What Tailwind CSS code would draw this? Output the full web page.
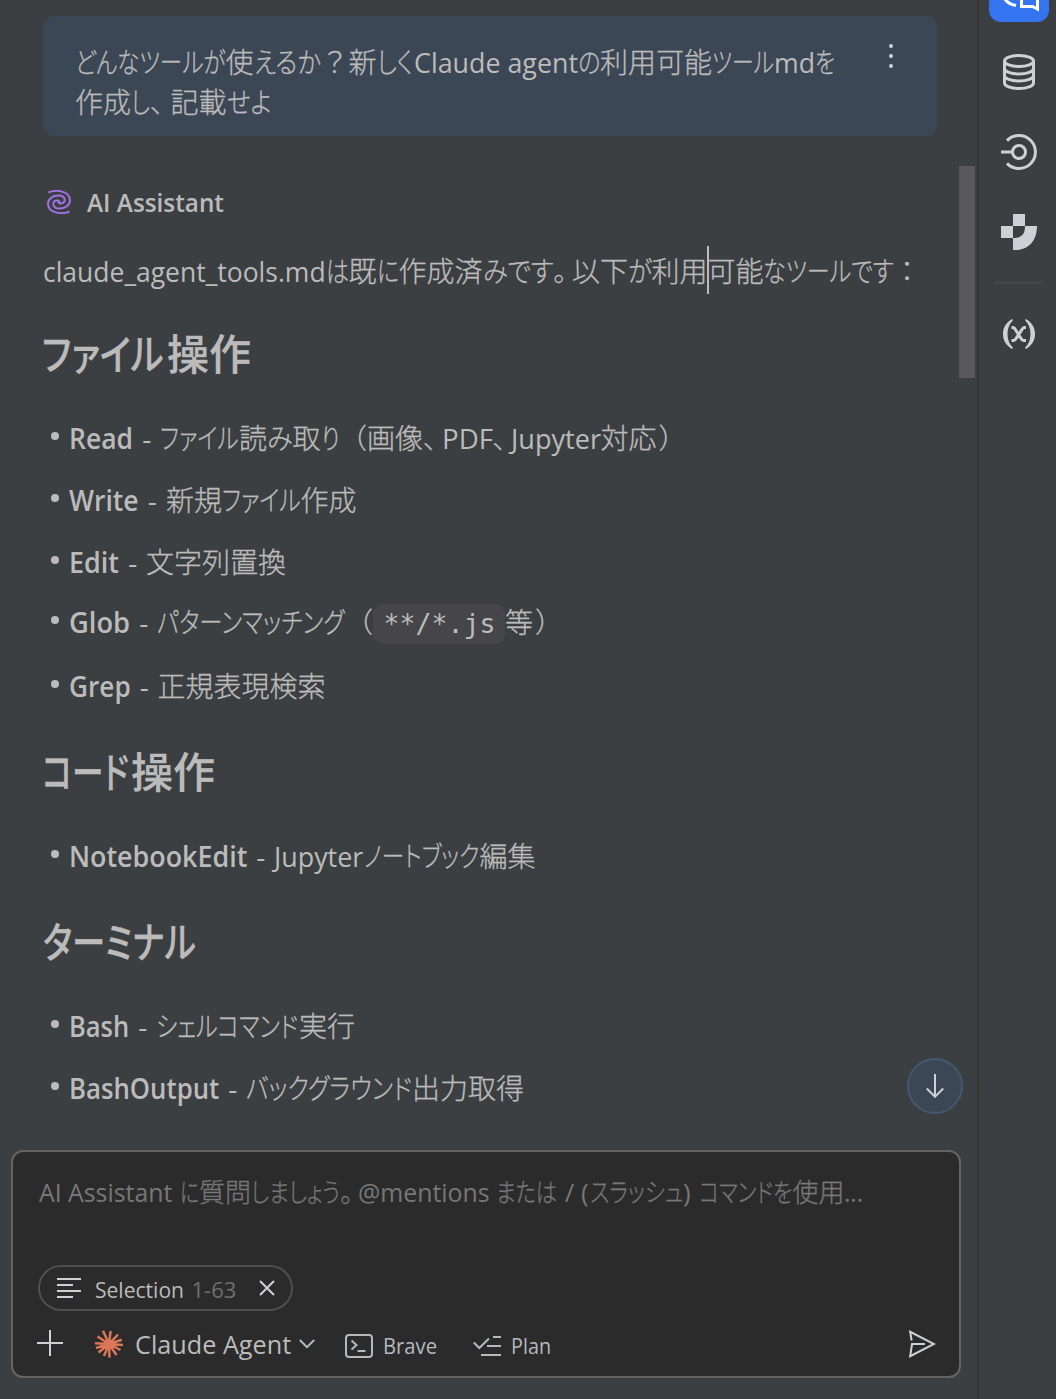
<!DOCTYPE html>
<html lang="ja">
<head>
<meta charset="utf-8">
<title>AI Assistant</title>
<script src="https://cdn.jsdelivr.net/npm/@tailwindcss/browser@4"></script>
</head>
<body class="bg-[#3c3f41]">
<div class="relative flex w-[1056px] h-[1399px] overflow-hidden bg-[#3c3f41] text-[#bbbbbb] text-[28px] leading-[40px] font-light font-['Noto_Sans_CJK_JP',sans-serif] [font-feature-settings:'palt'] [&_span]:whitespace-pre [&_span]:shrink-0 [&_span]:origin-left [&_span]:[-webkit-text-stroke:0.3px] [&_b]:whitespace-pre [&_b]:shrink-0 [&_b]:origin-left [&_b]:font-semibold [&_b]:font-['Open_Sans'] [&_i]:not-italic [&_i]:font-normal [&_i]:font-['Open_Sans'] [&_i]:whitespace-pre [&_i]:shrink-0 [&_i]:origin-left">

<!-- Chat column -->
<main class="w-[977px] h-full shrink-0 flex flex-col">
  <section class="mt-4 ml-[43px] w-[894px] h-[120px] shrink-0 rounded-xl bg-[#3c4755] pl-8 pr-11 pt-6 flex justify-between">
    <div class="pt-px">
      <div class="flex items-baseline h-10">
        <span class="w-[150.5px] scale-x-[.807]">どんなツールが</span><span class="w-[28px]">使</span><span class="w-[67px] scale-x-[.873]">えるか</span><span class="w-[28px] pl-[4px]">？</span><span class="w-[28px]">新</span><span class="w-[37px] scale-x-[.839]">しく</span><i class="w-[164px] scale-x-[.958]">Claude agent</i><span class="w-[22.5px] scale-x-[.833]">の</span><span class="w-[112px]">利用可能</span><span class="w-[62px] scale-x-[.779]">ツール</span><i class="w-[41px] scale-x-[.952]">md</i><span class="w-[20px] scale-x-[.773]">を</span>
      </div>
      <div class="flex items-baseline h-10">
        <span class="w-[56px]">作成</span><span class="w-[19px] scale-x-[.803]">し</span><span class="w-[20.5px]">、</span><span class="w-[56px]">記載</span><span class="w-[44.5px] scale-x-[.865]">せよ</span>
      </div>
    </div>
    <div class="flex flex-col gap-1.5 pt-1 *:size-1 *:rounded-full *:bg-[#ced0d6]"><div></div><div></div><div></div></div>
  </section>

  <div class="mt-[46px] ml-[47px] h-10 shrink-0 flex items-center text-[26px]">
    <svg class="size-6" viewBox="0 0 24 24" fill="none" stroke="#a571e6" stroke-width="1.900" stroke-linecap="round"><path d="M2.200 2.200C9-.4 23 .6 23 10.200c0 5.300-5 8.300-10 8.300-4 0-6.700-1.800-6.700-4.600 0-2.100 1.900-3.400 4.200-3.400 1.200 0 1.900.6 1.900 1.500"/><path d="M21.800 21.800C15 24.400 1 23.400 1 13.800c0-5.300 5-8.300 10-8.300 4 0 6.700 1.800 6.700 4.600 0 2.100-1.900 3.400-4.200 3.400-1.200 0-1.900-.6-1.900-1.500"/></svg>
    <b class="ml-4 w-[137px] scale-x-[.935]">AI Assistant</b>
  </div>

  <div class="relative mt-7 ml-[43px] h-10 shrink-0 flex items-baseline">
    <i class="w-[282.5px] scale-x-[.946]">claude_agent_tools.md</i><span class="w-[23px] scale-x-[.821]">は</span><span class="w-[28px]">既</span><span class="w-[22px] scale-x-[.816]">に</span><span class="w-[84px]">作成済</span><span class="w-[70.5px] scale-x-[.897]">みです</span><span class="w-[19px]">。</span><span class="w-[56px]">以下</span><span class="w-[23.500px] scale-x-[.875]">が</span><span class="w-[111px]">利用可能</span><span class="w-[130.5px] scale-x-[.825]">なツールです</span><span class="w-[28px] pl-[7px]">：</span>
    <div class="absolute left-[664px] top-[-4px] w-0.5 h-12 bg-[#bbbbbb]"></div>
  </div>

  <h2 class="mt-[31px] ml-[42px] h-[60px] pt-px shrink-0 flex items-baseline text-[42px] leading-[60px] font-medium"><span class="w-[125px] scale-x-[.835]">ファイル</span><span class="w-[84px]">操作</span></h2>

  <ul class="mt-[35px] ml-[51px] shrink-0 flex flex-col [&>li]:flex [&>li]:gap-2.5 [&>li]:h-10 [&>li>div]:flex [&>li>div]:items-baseline [&>li>div]:pt-px [&>li]:before:size-2 [&>li]:before:mt-4 [&>li]:before:rounded-full [&>li]:before:bg-[#bbbbbb]">
    <li><div><b class="w-[64px] scale-x-[.945]">Read</b><i class="w-[27px] pl-[2px]"> - </i><span class="w-[79px] scale-x-[.81]">ファイル</span><span class="w-[28px]">読</span><span class="w-[25.5px] scale-x-[.931]">み</span><span class="w-[28px]">取</span><span class="w-[18.500px] scale-x-[.794]">り</span><span class="w-[28px] pl-[13px]">（</span><span class="w-[56px]">画像</span><span class="w-[18.500px]">、</span><i class="w-[51px] scale-x-[.988]">PDF</i><span class="w-[18px]">、</span><i class="w-[90px] scale-x-[.968]">Jupyter</i><span class="w-[56px]">対応</span><span class="pl-[3px]">）</span></div></li>
    <li class="mt-[22px]"><div><b class="w-[69.5px] scale-x-[.945]">Write</b><i class="w-[27.5px] pl-[2px]"> - </i><span class="w-[56px]">新規</span><span class="w-[78.500px] scale-x-[.81]">ファイル</span><span>作成</span></div></li>
    <li class="mt-[22px]"><div><b class="w-[50px] scale-x-[.962]">Edit</b><i class="w-[27px] pl-[2px]"> - </i><span>文字列置換</span></div></li>
    <li class="mt-5"><div><b class="w-[61px] scale-x-[.975]">Glob</b><i class="w-[27px] pl-[2px]"> - </i><span class="w-[188px] scale-x-[.834]">パターンマッチング</span><span class="w-[28px] pl-[13px]">（</span><code class="w-[132px] h-10 -mt-px rounded-[10px] bg-[#45454a] pl-[10.500px] text-[26.6px] font-normal font-['DejaVu_Sans_Mono']">**/*.js</code><span class="w-[28px]">等</span><span class="pl-[3px]">）</span></div></li>
    <li class="mt-6"><div><b class="w-[61.5px] scale-x-[.935]">Grep</b><i class="w-[27px] pl-[2px]"> - </i><span>正規表現検索</span></div></li>
  </ul>

  <h2 class="mt-[35px] ml-[42px] h-[60px] pt-px shrink-0 flex items-baseline text-[42px] leading-[60px] font-medium"><span class="w-[89px] scale-x-[.755]">コード</span><span class="w-[84px]">操作</span></h2>

  <ul class="mt-[35px] ml-[51px] shrink-0 flex flex-col [&>li]:flex [&>li]:gap-2.5 [&>li]:h-10 [&>li>div]:flex [&>li>div]:items-baseline [&>li>div]:pt-px [&>li]:before:size-2 [&>li]:before:mt-4 [&>li]:before:rounded-full [&>li]:before:bg-[#bbbbbb]">
    <li><div><b class="w-[179px] scale-x-[.96]">NotebookEdit</b><i class="w-[26px] pl-px"> - </i><i class="w-[90px] scale-x-[.96]">Jupyter</i><span class="w-[115.5px] scale-x-[.808]">ノートブック</span><span>編集</span></div></li>
  </ul>

  <h2 class="mt-[35px] ml-[43px] h-[60px] pt-px shrink-0 flex items-baseline text-[42px] leading-[60px] font-medium"><span class="w-[155px] scale-x-[.795]">ターミナル</span></h2>

  <ul class="mt-[35px] ml-[51px] shrink-0 flex flex-col [&>li]:flex [&>li]:gap-2.5 [&>li]:h-10 [&>li>div]:flex [&>li>div]:items-baseline [&>li>div]:pt-px [&>li]:before:size-2 [&>li]:before:mt-4 [&>li]:before:rounded-full [&>li]:before:bg-[#bbbbbb]">
    <li><div><b class="w-[60px] scale-x-[.91]">Bash</b><i class="w-[27px] pl-[2px]"> - </i><span class="w-[143px] scale-x-[.82]">シェルコマンド</span><span>実行</span></div></li>
    <li class="mt-[22px]"><div><b class="w-[151px] scale-x-[.92]">BashOutput</b><i class="w-[26px] pl-[1px]"> - </i><span class="w-[166px] scale-x-[.854]">バックグラウンド</span><span>出力取得</span></div></li>
  </ul>

  <!-- Prompt box -->
  <section class="mt-11 ml-[11px] w-[950px] h-[228px] shrink-0 rounded-xl border-2 border-[#646464] bg-[#2b2b2b] pt-[19px] pl-6 pr-[23px]">
    <div class="ml-[2px] h-10 flex items-baseline text-[26px] text-[#777777]">
      <i class="w-[141px] scale-x-[.955]">AI Assistant</i><span class="w-[19px] scale-x-[.759]">に</span><span class="w-[52px]">質問</span><span class="w-[89px] scale-x-[.826]">しましょう</span><span class="w-[18px]">。</span><i class="w-[138px] scale-x-[.955]">@mentions</i><span class="w-[62px] scale-x-[.816]">または</span><i class="w-[32px]"> / (</i><span class="w-[93px] scale-x-[.828]">スラッシュ</span><i class="w-[16px]">) </i><span class="w-[93.5px] scale-x-[.808]">コマンドを</span><span class="w-[51.500px]">使用</span><i class="scale-x-[.927]">...</i>
    </div>
    <div class="mt-[54px] ml-px w-[255px] h-[46px] rounded-full border-2 border-[#4f4f4f] flex items-center text-[22px]">
      <svg class="ml-[17px] -mt-px w-6 h-5 shrink-0" viewBox="0 0 24 20" fill="#ced0d6"><path d="M0 0h24v2H0zM0 6h16v2H0zM0 12h24v2H0zM0 18h16v2H0z"/></svg>
      <i class="ml-3.5 mt-[2px] w-[96.5px] scale-x-[.957]">Selection</i><i class="mt-[2px] w-[45px] text-[#6f6f6f]">1-63</i>
      <svg class="ml-[22px] -mt-px size-4 shrink-0" viewBox="0 0 16 16" fill="none" stroke="#ced0d6" stroke-width="2"><path d="M1 1l14 14M15 1L1 15"/></svg>
    </div>
    <div class="mt-[13px] h-10 flex items-center text-[26px]">
      <svg class="-mt-0.5 size-[26px] shrink-0" viewBox="0 0 26 26" fill="none" stroke="#ced0d6" stroke-width="2"><path d="M13 0v26M0 13h26"/></svg>
      <svg class="ml-8 size-7 shrink-0" viewBox="0 0 28 28" fill="none" stroke="#d97757" stroke-width="2.500"><path d="M14 14L8 .8M14 14L15.600 .8M14 14L23 4.500M14 14L26.800 9.800M14 14L28 15M14 14L25.500 20M14 14L21.500 25M14 14L14.500 27.600M14 14L9 26M14 14L3.500 22.500M14 14L1 18M14 14L0 13.200M14 14L2.500 6.500"/><circle cx="14" cy="14" r="3.500" fill="#d97757"/></svg>
      <i class="ml-3 w-[157px] scale-x-[.97]">Claude Agent</i>
      <svg class="ml-[7px] w-4 h-[10px] shrink-0" viewBox="0 0 16 10" fill="none" stroke="#b4b8bf" stroke-width="2"><path d="M.8 1l7.200 7.200L15.200 1"/></svg>
      <svg class="ml-[30px] mt-1 w-7 h-6 shrink-0" viewBox="0 0 28 24" fill="none" stroke="#b4b8bf" stroke-width="2"><rect x="1" y="1" width="26" height="22" rx="3"/><path d="M6.500 6.500l5 4.500-5 4.500M12.500 17h8"/></svg>
      <i class="ml-2.5 mt-[2px] w-[54px] scale-x-[.919] text-[22px] text-[#b4b8bf]">Brave</i>
      <svg class="ml-9 mt-1 w-7 h-5 shrink-0" viewBox="0 0 28 20" fill="none" stroke="#b4b8bf" stroke-width="2"><path d="M.8 6.500l5.500 5.500L16 2.500M20 1h8M14 10h14M8 19h20"/></svg>
      <i class="ml-2.5 mt-[2px] w-[40px] scale-x-[.899] text-[22px] text-[#b4b8bf]">Plan</i>
      <svg class="ml-auto w-[27px] h-7 shrink-0" viewBox="0 0 27 28" fill="none" stroke="#ced0d6" stroke-width="2"><path d="M2.600 10.500L1.200 1.800 25 14 1.200 26.200 3 14h13"/></svg>
    </div>
  </section>
  <div class="mt-[11px] ml-[418px] h-10 shrink-0 flex text-[22px] text-[#787878]"><span class="scale-x-[.8]">ガバナー は な</span></div>
</main>

<div class="w-0.5 h-full shrink-0 bg-[#3a3332]"></div>

<!-- Tool window bar -->
<aside class="flex-1 h-full flex flex-col items-center pr-[1px]">
  <div class="ml-[4px] w-[60px] h-[22px] shrink-0 rounded-b-xl bg-[#3574f0]">
    <svg class="w-[60px] h-[22px]" viewBox="0 0 60 22" fill="none" stroke="#fff" stroke-width="3"><path d="M15-2c2.500 4 6 6.500 12 7.500M32.500-3v9.500h11L48.500 9V-3"/></svg>
  </div>
  <svg class="ml-[4px] mt-8 w-8 h-9 shrink-0" viewBox="0 0 32 36" fill="none" stroke="#ced0d6" stroke-width="3"><ellipse cx="16" cy="7" rx="14.500" ry="5.500"/><path d="M1.500 7v22c0 3 6.500 5.500 14.500 5.500S30.500 32 30.500 29V7M1.500 14.500C1.500 17.500 8 20 16 20s14.500-2.500 14.500-5.500M1.500 21.500C1.500 24.500 8 27 16 27s14.500-2.500 14.500-5.500"/></svg>
  <svg class="ml-[4px] mt-11 size-9 shrink-0" viewBox="0 0 36 36" fill="none" stroke="#ced0d6" stroke-width="3"><path d="M6 6.600A16.500 16.500 0 1 1 6 29.400M0 18h11.500"/><circle cx="18" cy="18" r="6.500"/></svg>
  <svg class="ml-[4px] mt-11 size-9 shrink-0" viewBox="0 0 36 36" fill="#ced0d6"><path d="M12 0h12v12H12zM0 12h12v12H0zM24 12h12c0 15-9 24-21 24h-3V24c8 0 12-3 12-12z"/></svg>
  <div class="ml-[4px] mt-8 w-12 h-0.5 shrink-0 bg-[#46474a]"></div>
  <svg class="ml-[4px] mt-[35px] w-8 h-[30px] shrink-0" viewBox="0 0 32 30" fill="#ced0d6"><path d="M9 0C2.500 4 0 9 0 15s2.500 11 9 15l1-1.200C6.500 25.500 4.500 21 4.500 15S6.500 4.500 10 1.200zM23 0c6.500 4 9 9 9 15s-2.500 11-9 15l-1-1.200c3.500-3.300 5.500-7.800 5.500-13.800S25.500 4.500 22 1.200z"/><path d="M8.500 8.500h1.300c1.200 0 1.700.5 2.400 1.700l6 9.600c.7 1.200 1.300 1.700 2.400 1.700h2.400M23 8.500h-1.300c-1.200 0-1.800.5-2.500 1.700l-6.400 9.600c-.7 1.200-1.300 1.700-2.400 1.700H8.500" fill="none" stroke="#ced0d6" stroke-width="3"/></svg>
</aside>

<!-- Scrollbar thumb and jump-to-bottom button float over the chat -->
<div class="absolute left-[959px] top-[166px] w-4 h-[212px] bg-[#59595d]"></div>
<div class="absolute left-[907px] top-[1058px] size-14 rounded-full border-2 border-[#44586f] bg-[#3c4755] flex items-center justify-center">
  <svg class="w-[18px] h-6" viewBox="0 0 18 24" fill="none" stroke="#ced0d6" stroke-width="2"><path d="M9 0v22.500M.8 14.500L9 22.700l8.200-8.200"/></svg>
</div>
</div>
</body>
</html>
